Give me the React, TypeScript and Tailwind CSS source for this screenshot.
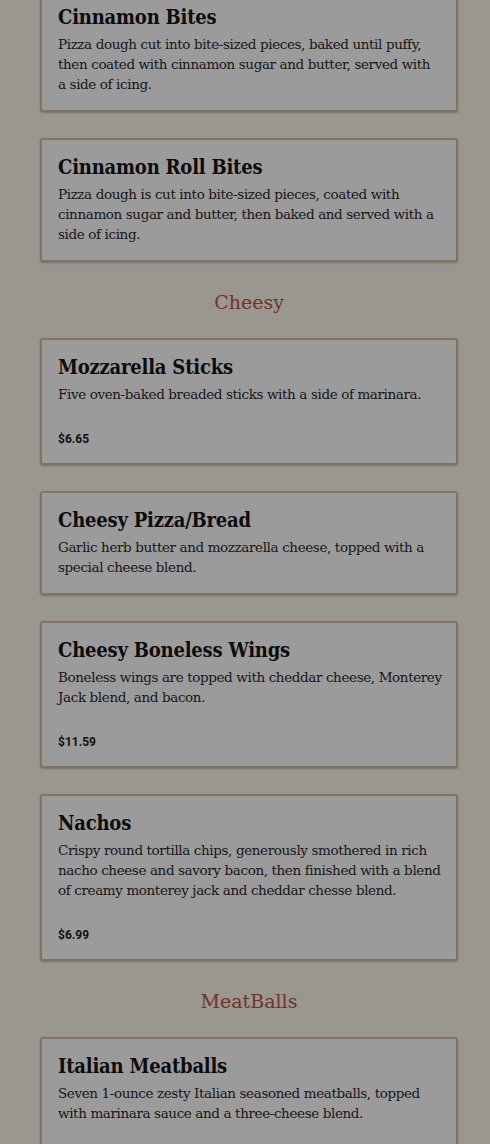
import React from 'react';

type Item = { name: string; desc: string; price?: string };

const sections: { title?: string; items: Item[] }[] = [
    {
        items: [
            {
                name: 'Cinnamon Bites',
                desc: 'Pizza dough cut into bite-sized pieces, baked until puffy, then coated with cinnamon sugar and butter, served with a\u00a0side of icing.',
            },
            {
                name: 'Cinnamon Roll Bites',
                desc: 'Pizza dough is cut into bite-sized pieces, coated with cinnamon sugar and butter, then baked and served with a side of icing.',
            },
        ],
    },
    {
        title: 'Cheesy',
        items: [
            { name: 'Mozzarella Sticks', desc: 'Five oven-baked breaded sticks with a side of marinara.', price: '$6.65' },
            { name: 'Cheesy Pizza/Bread', desc: 'Garlic herb butter and mozzarella cheese, topped with a special cheese blend.' },
            {
                name: 'Cheesy Boneless Wings',
                desc: 'Boneless wings are topped with cheddar cheese, Monterey Jack blend, and bacon.',
                price: '$11.59',
            },
            {
                name: 'Nachos',
                desc: 'Crispy round tortilla chips, generously smothered in rich nacho cheese and savory bacon, then finished with a blend of creamy monterey jack and cheddar chesse blend.',
                price: '$6.99',
            },
        ],
    },
    {
        title: 'MeatBalls',
        items: [
            {
                name: 'Italian Meatballs',
                desc: 'Seven 1-ounce zesty Italian seasoned meatballs, topped with marinara sauce and a three-cheese blend.',
                price: '$7.49',
            },
        ],
    },
];

const serif = "font-['DejaVu_Serif',serif]";

const MenuCard: React.FC<{ item: Item }> = ({ item }) => (
    <div className="bg-[#9b9b9b] border-2 border-[#857360] rounded-[3px] shadow-[0_1px_2px_rgba(0,0,0,0.25)] pl-4 pr-3 pt-[14px] pb-4">
        <h3 className={`${serif} font-stretch-condensed text-[20px] leading-[26px] font-bold text-[#0c0c0c] tracking-[-0.2px]`}>
            {item.name}
        </h3>
        <p className={`${serif} mt-1 text-[13.5px] leading-5 text-[#161616] tracking-[-0.38px]`}>{item.desc}</p>
        {item.price && (
            <p className="mt-[27px] font-['Roboto',sans-serif] font-bold text-[12px] leading-4 text-[#111]">{item.price}</p>
        )}
    </div>
);

export default function App() {
    return (
        <div className="min-h-screen bg-[#99978f] overflow-hidden">
            <div className="pl-10 pr-8 -mt-3 flex flex-col gap-[26px] pb-10">
                {sections.map((section, i) => (
                    <React.Fragment key={i}>
                        {section.title && (
                            <h2 className={`${serif} -mb-1 text-center text-[19px] leading-7 text-[#76302a]`}>{section.title}</h2>
                        )}
                        {section.items.map((item) => (
                            <MenuCard key={item.name} item={item} />
                        ))}
                    </React.Fragment>
                ))}
            </div>
        </div>
    );
}
